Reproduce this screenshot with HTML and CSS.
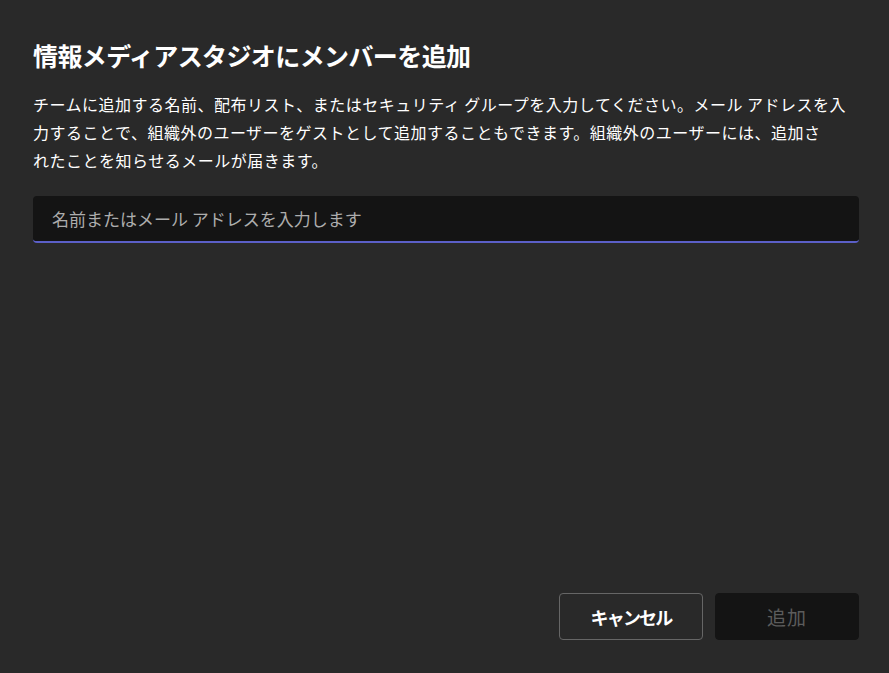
FILE: index.html
```html
<!DOCTYPE html>
<html lang="ja">
<head>
    <meta charset="UTF-8">
    <meta name="viewport" content="width=device-width, initial-scale=1.0">
    <title>メンバーを追加</title>
    <link rel="stylesheet" href="styles.css">
</head>
<body>
    <div class="dialog">
        <h1 class="dialog-title">情報メディアスタジオにメンバーを追加</h1>
        <p class="dialog-text">チームに追加する名前、配布リスト、またはセキュリティ グループを入力してください。メール アドレスを入力することで、組織外のユーザーをゲストとして追加することもできます。組織外のユーザーには、追加さ<br>れたことを知らせるメールが届きます。</p>

        <div class="field">
            <input type="text" class="field-input" placeholder="名前またはメール アドレスを入力します">
        </div>

        <div class="actions">
            <button class="btn btn-secondary">キャンセル</button>
            <button class="btn btn-primary" disabled>追加</button>
        </div>
    </div>
</body>
</html>
```

FILE: styles.css
```css
html, body {
    margin: 0;
    height: 100%;
}
body {
    background-color: #292929;
    color: #ffffff;
    font-family: "Noto Sans CJK JP", "Noto Sans", sans-serif;
    text-spacing-trim: space-all;
}
.dialog {
    box-sizing: border-box;
    height: 100%;
    display: flex;
    flex-direction: column;
    padding: 38px 30px 33px 33px;
}
.dialog-title {
    margin: 0;
    font-size: 25px;
    line-height: 34px;
    font-weight: 700;
    letter-spacing: -0.6px;
}
.dialog-text {
    margin: 18px 0 0;
    font-size: 16px;
    line-height: 28px;
    letter-spacing: 0.5px;
    color: #ffffff;
}
.field {
    margin-top: 22px;
}
.field-input {
    box-sizing: border-box;
    width: 100%;
    height: 47px;
    padding: 0 19px;
    background-color: #141414;
    border: none;
    border-bottom: 2px solid #5b5fc7;
    border-radius: 4px;
    color: #ffffff;
    font-family: inherit;
    font-size: 17px;
    outline: none;
}
.field-input::placeholder {
    color: #adadad;
}
.actions {
    margin-top: auto;
    display: flex;
    justify-content: flex-end;
    gap: 12px;
}
.btn {
    box-sizing: border-box;
    width: 144px;
    height: 47px;
    border-radius: 4px;
    font-family: inherit;
    font-size: 19px;
    cursor: pointer;
}
.btn-secondary {
    background-color: #292929;
    border: 1px solid #666666;
    color: #ffffff;
    font-size: 18px;
    font-weight: 700;
    letter-spacing: -1.8px;
}
.btn-primary {
    background-color: #141414;
    border: 1px solid #141414;
    color: #5c5c5c;
    font-weight: 400;
    letter-spacing: 1px;
    cursor: default;
}
```
